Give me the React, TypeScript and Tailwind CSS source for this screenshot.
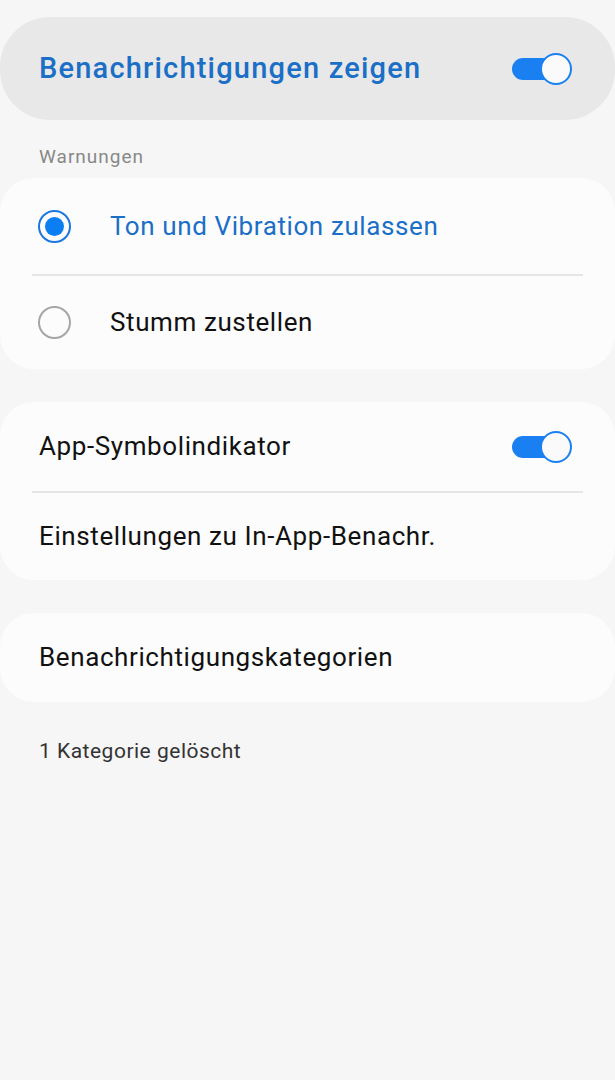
function Toggle() {
    return (
        <div className="relative w-[60px] h-[32px] shrink-0">
            <div className="absolute left-0 top-[5px] w-[52px] h-[22px] rounded-full bg-[#1a80f2]" />
            <div className="absolute right-0 top-0 w-[32px] h-[32px] rounded-full bg-[#fafafa] border-2 border-[#1a80f2]" />
        </div>
    );
}

function Radio({ checked }: { checked?: boolean }) {
    return checked ? (
        <div className="w-[33px] h-[33px] rounded-full border-2 border-[#1a78e0] flex items-center justify-center shrink-0">
            <div className="w-[19px] h-[19px] rounded-full bg-[#0b7ff2]" />
        </div>
    ) : (
        <div className="w-[33px] h-[33px] rounded-full border-2 border-[#a6a6a6] shrink-0" />
    );
}

function Divider() {
    return <div className="mx-[32px] h-[2px] bg-[#e6e6e6]" />;
}

export default function App() {
    return (
        <div className="min-h-[1080px] w-full bg-[#f6f6f6] pt-[17px] font-['Roboto',sans-serif] text-[#111]">
            <div className="h-[103px] rounded-[50px] bg-[#e8e8e8] flex items-center justify-between pl-[39px] pr-[43px]">
                <span className="text-[29px] font-medium text-[#1b6fc6] tracking-[1.2px]">Benachrichtigungen zeigen</span>
                <Toggle />
            </div>

            <div className="h-[58px] flex items-center pl-[39px] pt-[17px] text-[19px] tracking-[1px] text-[#888]">Warnungen</div>

            <div className="rounded-[34px] bg-[#fcfcfc]">
                <div className="h-[96px] flex items-center pl-[38px] gap-[39px]">
                    <Radio checked />
                    <span className="text-[26px] tracking-[0.6px] text-[#1b6fc6]">Ton und Vibration zulassen</span>
                </div>
                <Divider />
                <div className="h-[93px] flex items-center pl-[38px] gap-[39px]">
                    <Radio />
                    <span className="text-[26px] tracking-[0.6px]">Stumm zustellen</span>
                </div>
            </div>

            <div className="mt-[33px] rounded-[34px] bg-[#fcfcfc]">
                <div className="h-[89px] flex items-center justify-between pl-[39px] pr-[43px]">
                    <span className="text-[26px] tracking-[0.6px]">App-Symbolindikator</span>
                    <Toggle />
                </div>
                <Divider />
                <div className="h-[87px] flex items-center pl-[39px]">
                    <span className="text-[26px] tracking-[0.6px]">Einstellungen zu In-App-Benachr.</span>
                </div>
            </div>

            <div className="mt-[33px] h-[89px] rounded-[34px] bg-[#fcfcfc] flex items-center pl-[39px]">
                <span className="text-[26px] tracking-[0.6px]">Benachrichtigungskategorien</span>
            </div>

            <div className="pt-[34px] pl-[39px] text-[21px] tracking-[0.5px] text-[#333]">1 Kategorie gelöscht</div>
        </div>
    );
}
